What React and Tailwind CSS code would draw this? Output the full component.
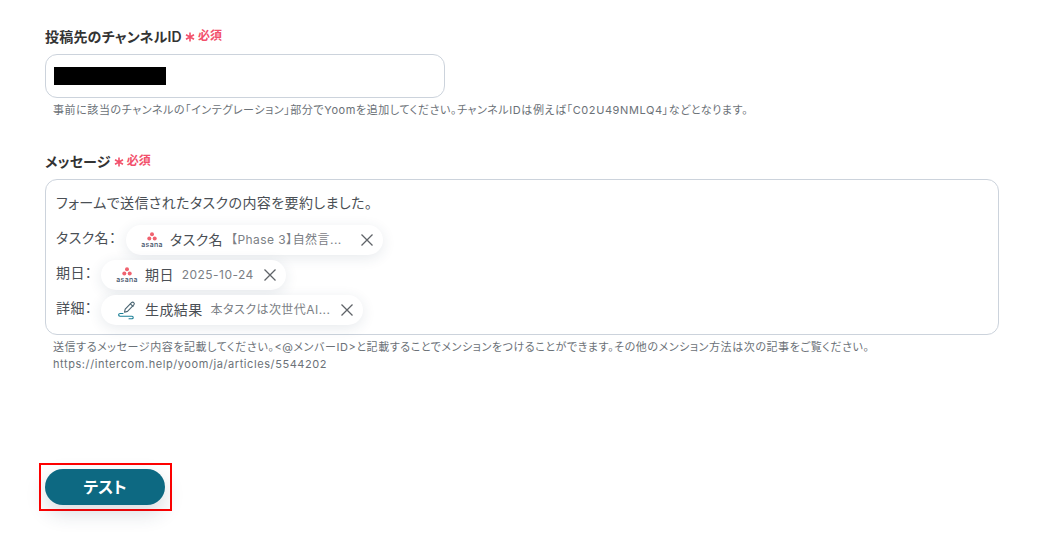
const FONT = "font-['Inter','Noto_Sans_CJK_JP',sans-serif] [font-feature-settings:'palt']"

function RequiredMark() {
  return (
    <span className="ml-[3px] inline-flex items-center gap-[3px] text-[12px] font-bold text-[#f2506b]">
      <svg width="10" height="10" viewBox="0 0 10 10" className="mt-[2px]" fill="none" stroke="#f2506b" strokeWidth="1.6">
        <path d="M5 .5v9M1 2.7l8 4.6M9 2.7L1 7.3" />
      </svg>
      必須
    </span>
  )
}

function AsanaIcon() {
  return (
    <span className="flex w-[22px] flex-col items-center">
      <svg width="10" height="9" viewBox="0 0 10 9" fill="#f0626f">
        <circle cx="5" cy="2.2" r="2" />
        <circle cx="2.3" cy="6.4" r="2" />
        <circle cx="7.7" cy="6.4" r="2" />
      </svg>
      <span className="text-[7px] leading-[8px] font-medium tracking-[0.3px] text-[#44546a]">asana</span>
    </span>
  )
}

function PenIcon() {
  return (
    <svg width="20" height="20" viewBox="0 0 20 20" fill="none" strokeLinecap="round" strokeLinejoin="round">
      <path d="M7.5 12.2l.7-3 6.3-6.6c.7-.7 1.7-.7 2.3 0 .6.6.6 1.6 0 2.2l-6.3 6.6-3 .8z" stroke="#4a6572" strokeWidth="1.1" />
      <path d="M13.4 3.8l2.6 2.5" stroke="#4a6572" strokeWidth="1.1" />
      <path d="M6 13.5H3.2C1.2 13.5 1 16 3 16.2h12c1.6 0 1.6 2.6 0 2.6h-3" stroke="#1b7f96" strokeWidth="1.1" />
    </svg>
  )
}

function Chip({ icon, name, value, className }) {
  return (
    <div className={`flex h-[30px] items-center rounded-full bg-white shadow-[0_3px_14px_rgba(40,60,90,0.11)] ${className}`}>
      {icon}
      <span className="pb-[1px] text-[14px] leading-[20px] text-[#4a4f55]">{name}</span>
      <span className="ml-[8px] pb-[1px] text-[12px] leading-[20px] tracking-[0.45px] text-[#7b8085]">{value}</span>
      <svg width="12" height="12" viewBox="0 0 12 12" className="ml-auto" fill="none" stroke="#5f6368" strokeWidth="1.3">
        <path d="M.5.5l11 11M11.5.5l-11 11" />
      </svg>
    </div>
  )
}

export default function App() {
  return (
    <div className={`h-[555px] w-[1054px] overflow-hidden bg-white pt-[27px] pl-[45px] ${FONT}`}>
      <label className="flex h-[18px] items-center text-[14px] font-semibold tracking-[0.2px] text-[#333]">
        投稿先のチャンネルID
        <RequiredMark />
      </label>
      <div className="mt-[9px] flex h-[44px] w-[400px] items-center rounded-[12px] border border-[#ccd3dc] pl-[8px]">
        <div className="h-[18px] w-[112px] bg-black" />
      </div>
      <p className="mt-[5px] pl-[8px] text-[11px] leading-[14px] tracking-[0.58px] text-[#6b7177]">
        事前に該当のチャンネルの「インテグレーション」部分でYoomを追加してください。チャンネルIDは例えば「C02U49NMLQ4」などとなります。
      </p>

      <label className="mt-[35px] flex h-[18px] items-center text-[14px] font-semibold tracking-[0.2px] text-[#333]">
        メッセージ
        <RequiredMark />
      </label>
      <div className="mt-[9px] h-[156px] w-[954px] rounded-[12px] border border-[#ccd3dc] pt-[14px] pl-[10px] text-[14px] tracking-[0.4px] text-[#4a4f55]">
        <p className="h-[18px] leading-[18px]">フォームで送信されたタスクの内容を要約しました。</p>
        <div className="mt-[13px] flex flex-col gap-[5px]">
          <div className="flex items-start">
            <span className="w-[70px] leading-[25px]">タスク名：</span>
            <Chip
              className="w-[257px] pr-[10px] pl-[15px]"
              icon={<AsanaIcon />}
              name={<span className="ml-[7px]">タスク名</span>}
              value="【Phase 3】自然言..."
            />
          </div>
          <div className="flex items-start">
            <span className="w-[45px] leading-[26px]">期日：</span>
            <Chip
              className="w-[185px] pr-[10px] pl-[15px]"
              icon={<AsanaIcon />}
              name={<span className="ml-[7px]">期日</span>}
              value="2025-10-24"
            />
          </div>
          <div className="flex items-start">
            <span className="w-[45px] leading-[26px]">詳細：</span>
            <Chip
              className="w-[262px] pr-[10px] pl-[16px]"
              icon={<PenIcon />}
              name={<span className="ml-[8px]">生成結果</span>}
              value="本タスクは次世代AI..."
            />
          </div>
        </div>
      </div>
      <p className="mt-[4px] pl-[8px] text-[11px] leading-[17px] tracking-[0.58px] text-[#6b7177]">
        送信するメッセージ内容を記載してください。&lt;@メンバーID&gt;と記載することでメンションをつけることができます。その他のメンション方法は次の記事をご覧ください。
        <br />
        https://intercom.help/yoom/ja/articles/5544202
      </p>

      <div className="mt-[90px] -ml-[6px] w-[133px] border-2 border-[#ff0000] px-[4px] py-[4px]">
        <button className="flex h-[36px] w-[120px] items-center justify-center rounded-full bg-[#0d6982] text-[16px] font-bold text-white shadow-[0_8px_20px_rgba(40,60,90,0.18)]">
          テスト
        </button>
      </div>
    </div>
  )
}
